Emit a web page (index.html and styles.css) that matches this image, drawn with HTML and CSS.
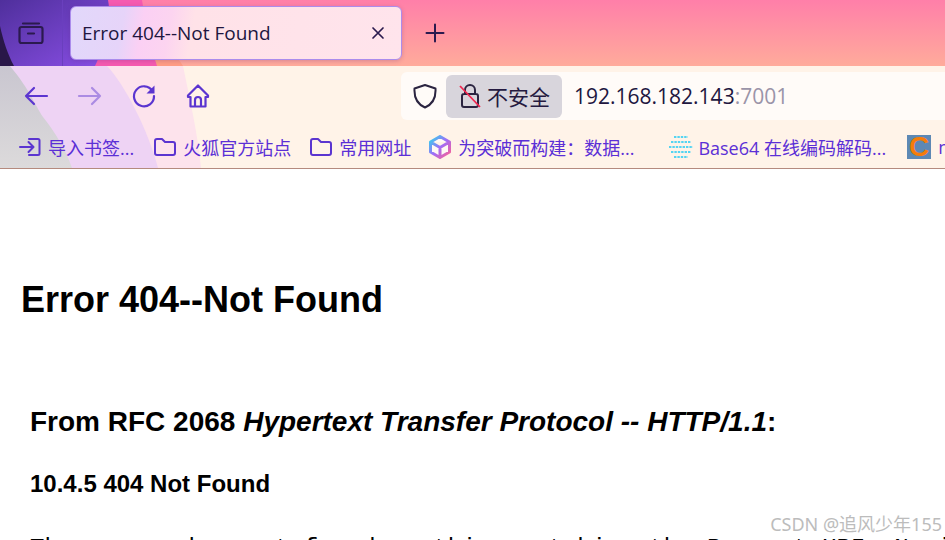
FILE: index.html
```html
<!DOCTYPE html>
<html lang="en">

<head>
  <meta charset="UTF-8">
  <title>Error 404--Not Found</title>
  <link rel="stylesheet" href="styles.css">
</head>

<body>
  <div class="chrome">
    <!-- Browser theme artwork -->
    <svg class="theme" width="945" height="169" viewBox="0 0 945 169" preserveAspectRatio="none">
      <defs>
        <linearGradient id="sky" x1="0" y1="0" x2="0" y2="1">
          <stop offset="0" stop-color="#ff7fa9" />
          <stop offset="1" stop-color="#ffab9b" />
        </linearGradient>
        <linearGradient id="violet" x1="0" y1="0" x2="1" y2="1">
          <stop offset="0" stop-color="#4f2f9c" />
          <stop offset="1" stop-color="#8a4fe6" />
        </linearGradient>
        <linearGradient id="ash" x1="0" y1="0" x2="0" y2="1">
          <stop offset="0" stop-color="#c9c6d0" />
          <stop offset="1" stop-color="#dcdadb" />
        </linearGradient>
      </defs>
      <rect width="945" height="66" fill="url(#sky)" />
      <path d="M135 0 C150 20 170 45 183 66 H150 L130 0 Z" fill="#ff9c84" />
      <path d="M105 0 H142 C145 20 150 45 157 66 H85 Z" fill="#f55ab0" />
      <path d="M0 0 H108 C112 20 105 45 95 66 H0 Z" fill="url(#violet)" />
      <path d="M0 26 C3 40 8 55 14 66 H0 Z" fill="#291748" />
      <rect y="66" width="945" height="102" fill="#fff3e8" />
      <path d="M0 66 H183 C190 100 198 135 201 168 H0 Z" fill="#fde3ec" />
      <path d="M0 66 H107 C125 85 148 130 158 168 H0 Z" fill="#eed3f4" />
      <path d="M0 66 H10 C30 90 35 105 43 117 C55 132 66 150 72 168 H0 Z" fill="url(#ash)" />
      <rect y="168" width="945" height="1" fill="#b58a7e" />
    </svg>

    <div class="tabbar">
      <div class="tab-side">
        <svg class="icon" width="26" height="26" viewBox="0 0 26 26">
          <path d="M5 3.500H21M1.500 9a2 2 0 0 1 2-2h19a2 2 0 0 1 2 2v12a2 2 0 0 1-2 2H3.500a2 2 0 0 1-2-2zM10 13.500h6" fill="none" stroke="#2b1a4e" stroke-width="2.200" stroke-linecap="round" />
        </svg>
      </div>
      <div class="tab">
        <span class="tab-title">Error 404--Not Found</span>
        <svg width="14" height="14" viewBox="0 0 14 14">
          <path d="M2 2L12 12M12 2L2 12" stroke="#2b1a4e" stroke-width="1.700" stroke-linecap="round" />
        </svg>
      </div>
      <svg class="new-tab" width="20" height="20" viewBox="0 0 20 20">
        <path d="M10 1.500V18.500M1.500 10H18.500" stroke="#2b1a4e" stroke-width="2" stroke-linecap="round" />
      </svg>
    </div>

    <div class="toolbar">
      <div class="nav">
        <svg width="26" height="26" viewBox="0 0 26 26">
          <path d="M24 13H3M11 5L3 13L11 21" fill="none" stroke="#5b35d0" stroke-width="2.200" stroke-linecap="round" stroke-linejoin="round" />
        </svg>
        <svg class="faded" width="26" height="26" viewBox="0 0 26 26">
          <path d="M2 13H23M15 5L23 13L15 21" fill="none" stroke="#5b35d0" stroke-width="2.200" stroke-linecap="round" stroke-linejoin="round" />
        </svg>
        <svg width="26" height="26" viewBox="0 0 26 26">
          <path d="M21.500 8A10 10 0 1 0 23 13" fill="none" stroke="#5b35d0" stroke-width="2.200" stroke-linecap="round" />
          <path d="M23.500 2.500V10.500H15.500Z" fill="#5b35d0" />
        </svg>
        <svg width="26" height="26" viewBox="0 0 26 26">
          <path d="M3 12.500L13 2.500L23 12.500V14H20.500V23.500H5.500V14H3ZM10 23.500V17a3 3 0 0 1 6 0V23.500" fill="none" stroke="#5b35d0" stroke-width="2.200" stroke-linejoin="round" />
        </svg>
      </div>
      <div class="urlbar">
        <svg class="shield" width="24" height="26" viewBox="0 0 24 26">
          <path d="M12 2L22.500 5.500C23 14 20 21 12 24.500C4 21 1 14 1.500 5.500Z" fill="none" stroke="#2b2440" stroke-width="2" stroke-linejoin="round" />
        </svg>
        <div class="insecure">
          <svg width="22" height="26" viewBox="0 0 22 26">
            <path d="M6 11V7a5 5 0 0 1 10 0v4M3 13a2 2 0 0 1 2-2h12a2 2 0 0 1 2 2v9a2 2 0 0 1-2 2H5a2 2 0 0 1-2-2z" fill="none" stroke="#2b2440" stroke-width="2" />
            <path d="M1 3L21 24" stroke="#f0264f" stroke-width="1.800" />
          </svg>
          <span>不安全</span>
        </div>
        <div class="url">192.168.182.143<span class="port">:7001</span></div>
      </div>
    </div>

    <div class="bookmarks">
      <div class="mark m-import">
        <svg width="22" height="20" viewBox="0 0 22 20">
          <path d="M10 2H19a1.500 1.500 0 0 1 1.500 1.500V16.500A1.500 1.500 0 0 1 19 18H10M1 10H14M9.500 5L14.500 10L9.500 15" fill="none" stroke="#5b35d0" stroke-width="2" stroke-linecap="round" stroke-linejoin="round" />
        </svg>
        <span>导入书签...</span>
      </div>
      <div class="mark m-fox">
        <svg width="22" height="20" viewBox="0 0 22 20">
          <path d="M1 4a2 2 0 0 1 2-2H8l3 3H19a2 2 0 0 1 2 2V16a2 2 0 0 1-2 2H3a2 2 0 0 1-2-2Z" fill="none" stroke="#5b35d0" stroke-width="2" stroke-linejoin="round" />
        </svg>
        <span>火狐官方站点</span>
      </div>
      <div class="mark m-common">
        <svg width="22" height="20" viewBox="0 0 22 20">
          <path d="M1 4a2 2 0 0 1 2-2H8l3 3H19a2 2 0 0 1 2 2V16a2 2 0 0 1-2 2H3a2 2 0 0 1-2-2Z" fill="none" stroke="#5b35d0" stroke-width="2" stroke-linejoin="round" />
        </svg>
        <span>常用网址</span>
      </div>
      <div class="mark m-cube">
        <svg width="22" height="24" viewBox="0 0 22 24">
          <defs>
            <linearGradient id="cube" x1="0" y1="0" x2="1" y2="1">
              <stop offset="0" stop-color="#2fd6ec" />
              <stop offset="0.500" stop-color="#a06cf8" />
              <stop offset="1" stop-color="#ff5f90" />
            </linearGradient>
          </defs>
          <path d="M11 1.500L20.500 7V17L11 22.500L1.500 17V7ZM1.500 7L11 12.500L20.500 7M11 12.500V22.500" fill="#fff" fill-opacity="0.500" stroke="url(#cube)" stroke-width="3" stroke-linejoin="round" />
        </svg>
        <span>为突破而构建：数据...</span>
      </div>
      <div class="mark m-base">
        <svg width="24" height="24" viewBox="0 0 24 24">
          <g fill="none" stroke="#55d4f2" stroke-width="2" stroke-dasharray="2.400 1">
            <path d="M5 2H19" />
            <path d="M2 7H22" />
            <path d="M0 12H24" />
            <path d="M2 17H22" />
            <path d="M5 22H19" />
          </g>
        </svg>
        <span>Base64 在线编码解码...</span>
      </div>
      <div class="mark m-cut">
        <span class="c-logo">C</span>
        <span>m</span>
      </div>
    </div>
  </div>

  <div class="page">
    <h1>Error 404--Not Found</h1>
    <div class="rfc">
      <h2>From RFC 2068 <i>Hypertext Transfer Protocol -- HTTP/1.1</i>:</h2>
      <h3>10.4.5 404 Not Found</h3>
      <p>The server has not found anything matching the Request-URI. No indication</p>
    </div>
  </div>

  <div class="watermark">CSDN @追风少年155</div>
</body>

</html>
```
FILE: styles.css
```css
html,
body {
  margin: 0;
  height: 540px;
  overflow: hidden;
  background: #fff;
}

body {
  position: relative;
  font-family: "Liberation Sans", Arial, sans-serif;
  color: #000;
}

.chrome {
  position: relative;
  height: 169px;
  font-family: "Open Sans", "Noto Sans CJK SC", sans-serif;
}

.theme {
  position: absolute;
  left: 0;
  top: 0;
}

.tabbar,
.toolbar,
.bookmarks {
  position: relative;
  display: flex;
  align-items: center;
}

.tabbar {
  height: 66px;
}

.tab-side {
  width: 63px;
  height: 66px;
  display: flex;
  align-items: center;
  justify-content: center;
  box-sizing: border-box;
  border-right: 1px solid #6a3fbe;
}

.tab {
  width: 332px;
  height: 54px;
  margin-left: 7px;
  padding: 0 16px 0 11px;
  box-sizing: border-box;
  display: flex;
  align-items: center;
  justify-content: space-between;
  background: linear-gradient(100deg, #e2d8fb 0%, #e6d4f9 16%, #fbd0f4 22%, #fcd4f0 30%, #ffe2e8 37%, #ffe4ec 100%);
  border: 1px solid #ab8cec;
  border-radius: 6px;
  box-shadow: 0 1px 4px rgba(90, 40, 120, 0.25);
}

.tab-title {
  font-size: 19px;
  color: #21163f;
}

.new-tab {
  margin-left: 23px;
}

.toolbar {
  height: 54px;
  align-items: flex-start;
}

.nav {
  width: 401px;
  height: 60px;
  padding-left: 23px;
  box-sizing: border-box;
  display: flex;
  align-items: center;
  gap: 28px;
}

.faded {
  opacity: 0.45;
}

.urlbar {
  flex: 1;
  height: 48px;
  margin-top: 6px;
  display: flex;
  align-items: center;
  background: #fffbf8;
  border-radius: 6px 0 0 6px;
}

.shield {
  margin-left: 12px;
}

.insecure {
  width: 116px;
  height: 43px;
  margin-left: 9px;
  padding-left: 13px;
  box-sizing: border-box;
  display: flex;
  align-items: center;
  gap: 6px;
  background: #d8d5dc;
  border-radius: 6px;
  font-size: 21px;
  color: #251a40;
}

.url {
  margin-left: 12px;
  font-size: 21px;
  color: #21163f;
}

.port {
  color: #9a94a8;
}

.bookmarks {
  height: 48px;
  padding-top: 6px;
  box-sizing: border-box;
  font-size: 18px;
  color: #5b2fd6;
  white-space: nowrap;
  overflow: hidden;
}

.mark {
  display: flex;
  align-items: center;
  gap: 7px;
  flex: none;
}

.m-import {
  margin-left: 19px;
}

.m-fox {
  margin-left: 20px;
}

.m-common {
  margin-left: 19px;
}

.m-cube {
  margin-left: 18px;
}

.m-base {
  margin-left: 35px;
  gap: 5px;
}

.m-cut {
  margin-left: 21px;
}

.c-logo {
  width: 24px;
  height: 24px;
  background: #5d88b4;
  color: #f57c0a;
  font: bold 28px/24px "Liberation Sans", sans-serif;
  text-align: center;
  overflow: hidden;
}

.page {
  padding: 111px 0 0 21px;
}

h1 {
  margin: 0;
  font-size: 36px;
  line-height: 40px;
}

.rfc {
  padding: 86px 0 0 9px;
}

h2 {
  margin: 0;
  font-size: 28px;
  line-height: 32px;
}

h3 {
  margin: 32px 0 0;
  font-size: 24px;
  line-height: 28px;
}

p {
  margin: 37px 0 0;
  font-family: "Liberation Mono", monospace;
  font-size: 24px;
  line-height: 28px;
  white-space: nowrap;
}

.watermark {
  position: absolute;
  right: 3px;
  top: 514px;
  font-family: "Noto Sans", "Noto Sans CJK SC", sans-serif;
  font-size: 18px;
  line-height: 20px;
  color: #bcbcbc;
}
```
